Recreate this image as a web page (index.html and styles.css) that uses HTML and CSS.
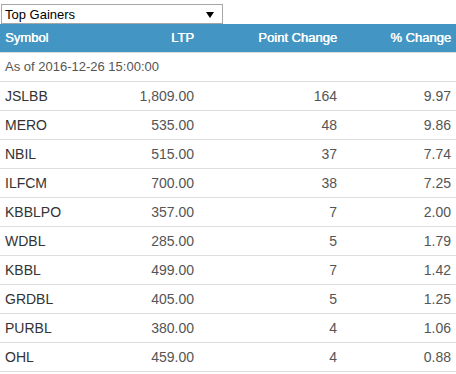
FILE: index.html
```html
<!DOCTYPE html>
<html>
<head>
<meta charset="utf-8">
<link rel="stylesheet" href="styles.css">
</head>
<body>
<div class="picker">
  <span class="picker-label">Top Gainers</span>
  <svg class="picker-arrow" width="8" height="6" viewBox="0 0 8 6"><path d="M0 0H8L4 6Z" fill="#000"/></svg>
</div>
<table class="movers">
  <colgroup>
    <col class="c1"><col class="c2"><col class="c3"><col class="c4">
  </colgroup>
  <thead>
    <tr><th class="left">Symbol</th><th>LTP</th><th>Point Change</th><th>% Change</th></tr>
  </thead>
  <tbody>
    <tr><td class="asof" colspan="4">As of 2016-12-26 15:00:00</td></tr>
    <tr><td class="sym">JSLBB</td><td>1,809.00</td><td>164</td><td>9.97</td></tr>
    <tr><td class="sym">MERO</td><td>535.00</td><td>48</td><td>9.86</td></tr>
    <tr><td class="sym">NBIL</td><td>515.00</td><td>37</td><td>7.74</td></tr>
    <tr><td class="sym">ILFCM</td><td>700.00</td><td>38</td><td>7.25</td></tr>
    <tr><td class="sym">KBBLPO</td><td>357.00</td><td>7</td><td>2.00</td></tr>
    <tr><td class="sym">WDBL</td><td>285.00</td><td>5</td><td>1.79</td></tr>
    <tr><td class="sym">KBBL</td><td>499.00</td><td>7</td><td>1.42</td></tr>
    <tr><td class="sym">GRDBL</td><td>405.00</td><td>5</td><td>1.25</td></tr>
    <tr><td class="sym">PURBL</td><td>380.00</td><td>4</td><td>1.06</td></tr>
    <tr><td class="sym">OHL</td><td>459.00</td><td>4</td><td>0.88</td></tr>
  </tbody>
</table>
</body>
</html>
```

FILE: styles.css
```css
html, body {
  margin: 0;
  padding: 0;
  background: #fff;
  font-family: "Liberation Sans", Arial, sans-serif;
}

.picker {
  box-sizing: border-box;
  margin: 4px 0 0 1px;
  width: 222px;
  height: 20px;
  border: 1px solid #a6a6a6;
  display: flex;
  align-items: center;
  justify-content: space-between;
  padding: 0 8px 0 3px;
  font-size: 13px;
  color: #000;
}

.picker-arrow {
  display: block;
  margin-top: 1px;
}

.movers {
  width: 456px;
  border-collapse: collapse;
  table-layout: fixed;
  font-size: 14px;
}

.c1 { width: 100px; }
.c2 { width: 99px; }
.c3 { width: 143px; }
.c4 { width: 114px; }

.movers th {
  background: #4396c4;
  color: #fff;
  font-size: 13px;
  font-weight: normal;
  text-shadow: 0.4px 0 0 #fff;
  text-align: right;
  height: 28px;
  padding: 0 5px;
  border-bottom: 1px solid #dddddd;
  box-sizing: border-box;
}

.movers th.left {
  text-align: left;
}

.movers td {
  height: 28px;
  padding: 0 5px;
  text-align: right;
  color: #555;
  border-bottom: 1px solid #dddddd;
  white-space: nowrap;
}

.movers td.sym {
  text-align: left;
  color: #333;
}

.movers td.asof {
  text-align: left;
  font-size: 13px;
  color: #555;
}
```
